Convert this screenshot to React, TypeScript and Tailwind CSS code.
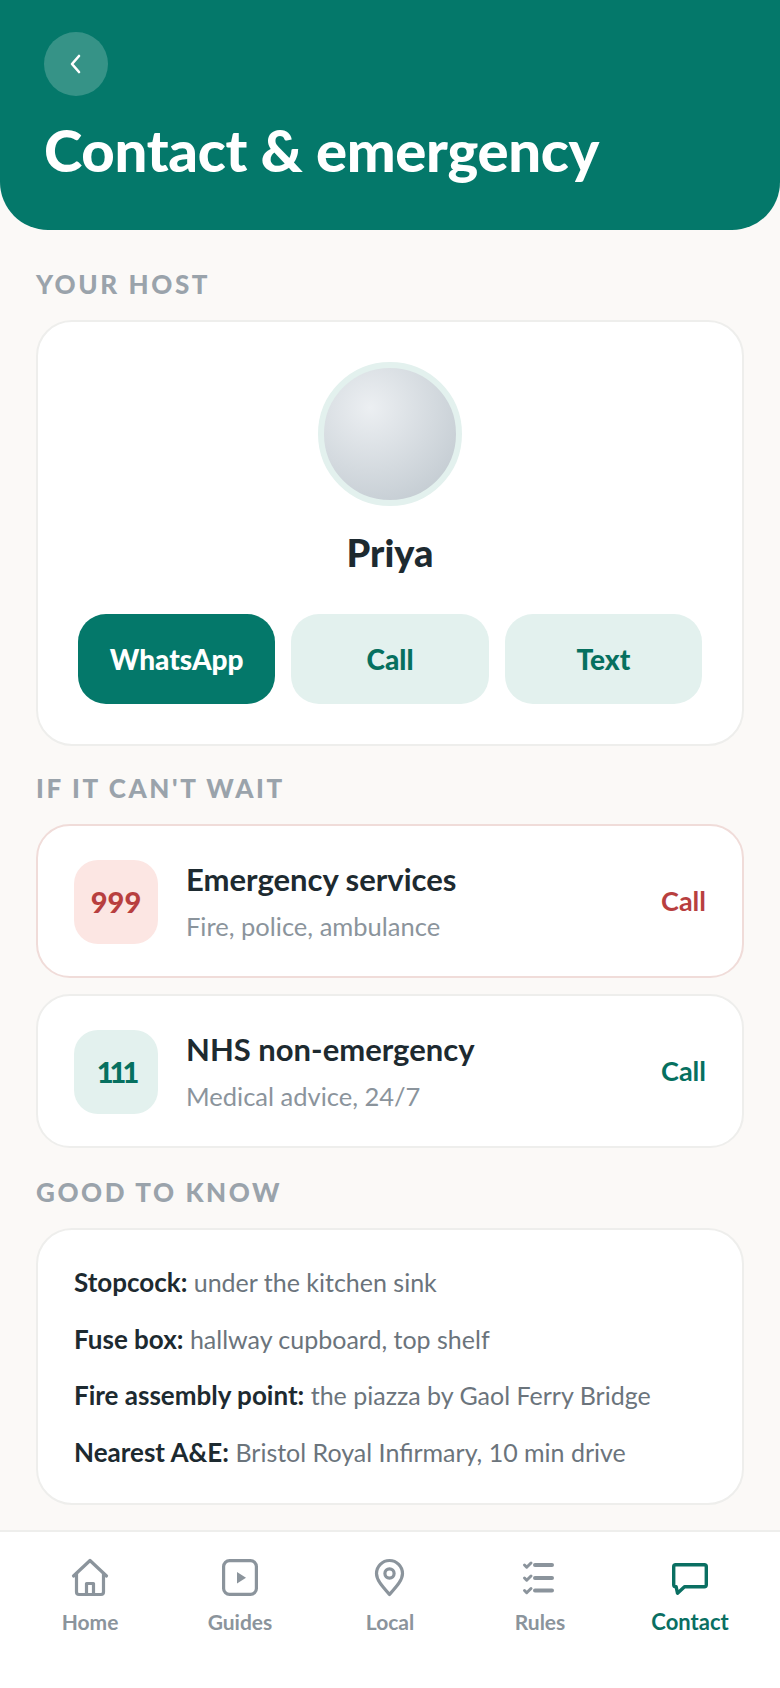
import React from "react";

const font = { fontFamily: '"Lato", "Noto Sans", sans-serif' };

function Section({ children }: { children: React.ReactNode }) {
  return <div className="text-[26px] leading-[32px] font-black tracking-[2.6px] text-[#9aa3ab] uppercase">{children}</div>;
}

function Home() {
  return (
    <svg width="44" height="44" viewBox="0 0 44 44" fill="none" stroke="#8b949c" strokeWidth="3.2" strokeLinecap="round" strokeLinejoin="round">
      <path d="M5.5 20 22 4.5 38.5 20" />
      <path d="M8.5 17.5V36a2.5 2.5 0 0 0 2.5 2.5h22a2.5 2.5 0 0 0 2.5-2.5V17.5" />
      <path d="M18.5 38.5v-11h7v11" />
    </svg>
  );
}
function Guides() {
  return (
    <svg width="44" height="44" viewBox="0 0 44 44" fill="none" stroke="#8b949c" strokeWidth="3.2" strokeLinejoin="round">
      <rect x="5.6" y="4.6" width="32.8" height="33.8" rx="6" />
      <path d="M19 16v11.5l9-5.75z" fill="#8b949c" stroke="none" />
    </svg>
  );
}
function Local() {
  return (
    <svg width="44" height="44" viewBox="0 0 44 44" fill="none" stroke="#8b949c" strokeWidth="3.2" strokeLinejoin="round">
      <path d="M21.5 38.5C14 30 8.5 24 8.5 17.5a13 13 0 0 1 26 0c0 6.5-5.5 12.5-13 21z" />
      <circle cx="21.5" cy="17.5" r="4.6" />
    </svg>
  );
}
function Rules() {
  return (
    <svg width="44" height="44" viewBox="0 0 44 44" fill="none" stroke="#8b949c" strokeLinecap="round" strokeLinejoin="round">
      <g strokeWidth="3">
        <path d="M6.5 9l2.2 2.2L13 7" />
        <path d="M6.5 22l2.2 2.2L13 20" />
        <path d="M6.5 34.5l2.2 2.2L13 32.5" />
      </g>
      <g strokeWidth="4">
        <path d="M17 9h17M17 22h17M17 34.5h17" />
      </g>
    </svg>
  );
}
function Contact() {
  return (
    <svg width="44" height="44" viewBox="0 0 44 44" fill="none" stroke="#0a6f62" strokeWidth="3.4" strokeLinejoin="round">
      <path d="M5.7 10.7a2 2 0 0 1 2-2h28.6a2 2 0 0 1 2 2v18a2 2 0 0 1-2 2H16.5l-7 6.5-1.4-6.5h-.4a2 2 0 0 1-2-2z" />
    </svg>
  );
}

function Row({ code, title, sub, red }: { code: string; title: string; sub: string; red?: boolean }) {
  return (
    <div className={`flex items-center bg-white rounded-[34px] border-2 px-[36px] py-[32px] ${red ? "border-[#f0dcd9]" : "border-[#eeeeec]"}`}>
      <div className={`mt-[2px] w-[84px] h-[84px] rounded-[24px] flex items-center justify-center text-[29px] font-black ${red ? "bg-[#fce6e3] text-[#b83f3f]" : "bg-[#e3f1ee] text-[#06705f] tracking-[-4px]"}`}>{code}</div>
      <div className="ml-[28px] flex-1">
        <div className="text-[31px] leading-[38px] font-bold text-[#1d2a30]">{title}</div>
        <div className="mt-[12px] text-[25.5px] leading-[32px] text-[#8b949c]">{sub}</div>
      </div>
      <div className={`text-[27px] font-bold ${red ? "text-[#b83f3f]" : "text-[#06705f]"}`}>Call</div>
    </div>
  );
}

function Fact({ b, t }: { b: string; t: string }) {
  return (
    <div className="text-[25px] leading-[36px] text-[#6b747c]">
      <b className="text-[26px] font-bold text-[#1d2a30]">{b}</b> {t}
    </div>
  );
}

function Tab({ icon, label, active }: { icon: React.ReactNode; label: string; active?: boolean }) {
  return (
    <div className="flex flex-col items-center gap-[8px]">
      {icon}
      <span className={`leading-[28px] font-bold ${active ? "text-[22px] text-[#0a6f62]" : "text-[21px] text-[#8b949c]"}`}>{label}</span>
    </div>
  );
}

export default function App() {
  return (
    <div style={font} className="w-[780px] h-[1688px] bg-[#fbf9f7] flex flex-col overflow-hidden">
      <header className="h-[230px] shrink-0 bg-[#04786a] rounded-b-[48px] pt-[32px] px-[44px]">
        <div className="w-[64px] h-[64px] rounded-full bg-white/20 flex items-center justify-center">
          <svg width="24" height="24" viewBox="0 0 24 24" fill="none" stroke="#fff" strokeWidth="2.6" strokeLinecap="round" strokeLinejoin="round">
            <path d="M15 4l-7 8 7 8" />
          </svg>
        </div>
        <h1 className="mt-[22px] text-[58px] leading-[64px] font-black text-white tracking-[-0.3px]">Contact &amp; emergency</h1>
      </header>
      <main className="flex-1 px-[36px] pt-[38px]">
        <Section>Your host</Section>
        <div className="mt-[20px] bg-white rounded-[36px] border-2 border-[#eeeeec] h-[426px] px-[40px] pt-[40px] flex flex-col items-center">
          <div className="w-[144px] h-[144px] rounded-full border-[6px] border-[#e3f1ee] bg-[radial-gradient(circle_at_35%_30%,#eceff2,#bcc5cc)]" />
          <div className="mt-[24px] text-[38px] leading-[44px] font-black text-[#1d2a30]">Priya</div>
          <div className="mt-[40px] w-full grid grid-cols-3 gap-[16px]">
            <div className="h-[90px] rounded-[28px] bg-[#04786a] text-white text-[28px] font-black flex items-center justify-center">WhatsApp</div>
            <div className="h-[90px] rounded-[28px] bg-[#e3f1ee] text-[#06705f] text-[28px] font-black flex items-center justify-center">Call</div>
            <div className="h-[90px] rounded-[28px] bg-[#e3f1ee] text-[#06705f] text-[28px] font-black flex items-center justify-center">Text</div>
          </div>
        </div>
        <div className="mt-[26px]"><Section>If it can't wait</Section></div>
        <div className="mt-[20px] flex flex-col gap-[16px]">
          <Row red code="999" title="Emergency services" sub="Fire, police, ambulance" />
          <Row code="111" title="NHS non-emergency" sub="Medical advice, 24/7" />
        </div>
        <div className="mt-[28px]"><Section>Good to know</Section></div>
        <div className="mt-[20px] bg-white rounded-[36px] border-2 border-[#eeeeec] px-[36px] pt-[34px] pb-[33px] flex flex-col gap-[20.5px]">
          <Fact b="Stopcock:" t="under the kitchen sink" />
          <Fact b="Fuse box:" t="hallway cupboard, top shelf" />
          <Fact b="Fire assembly point:" t="the piazza by Gaol Ferry Bridge" />
          <Fact b="Nearest A&E:" t="Bristol Royal Infirmary, 10 min drive" />
        </div>
      </main>
      <nav className="h-[158px] shrink-0 bg-white border-t-2 border-[#eeeeec] px-[15px] pt-[24px] grid grid-cols-5 items-start">
        <Tab icon={<Home />} label="Home" />
        <Tab icon={<Guides />} label="Guides" />
        <Tab icon={<Local />} label="Local" />
        <Tab icon={<Rules />} label="Rules" />
        <Tab active icon={<Contact />} label="Contact" />
      </nav>
    </div>
  );
}
